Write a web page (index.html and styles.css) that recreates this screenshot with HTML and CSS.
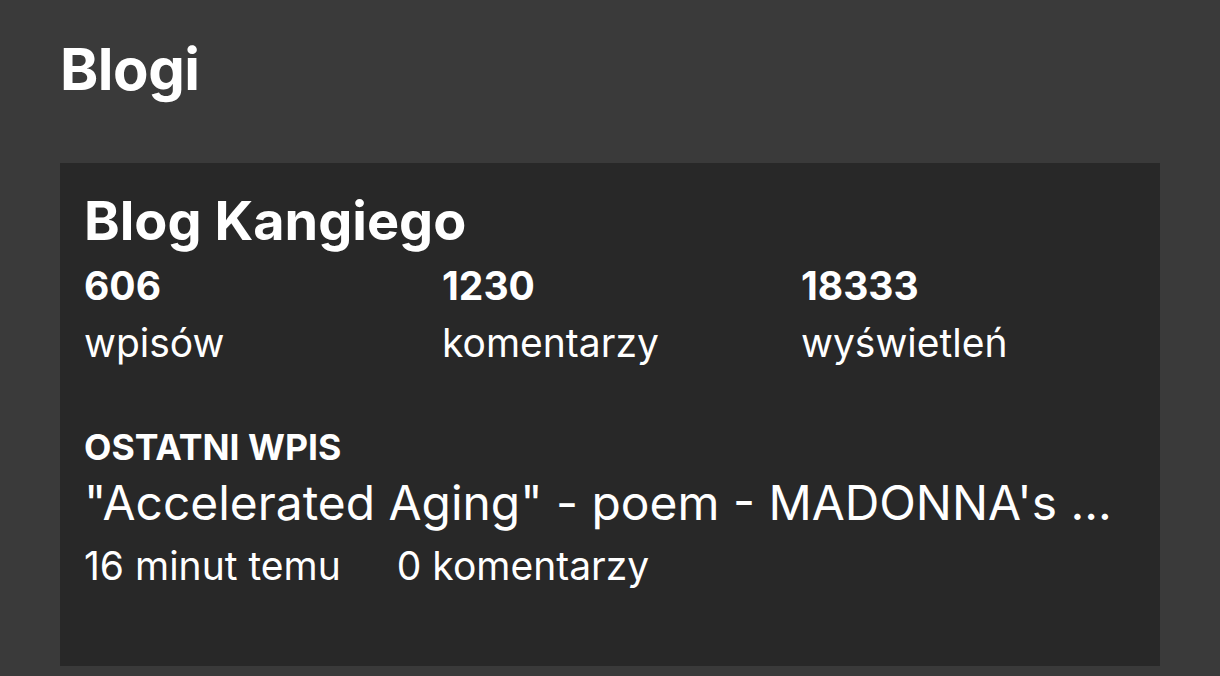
FILE: index.html
```html
<!DOCTYPE html>
<html lang="pl">
<head>
<meta charset="utf-8">
<link rel="stylesheet" href="styles.css">
</head>
<body>
<main class="page">
  <h1 class="page-title">Blogi</h1>
  <section class="card">
    <h2 class="blog-name">Blog Kangiego</h2>
    <div class="stats">
      <div class="stat"><div class="stat-value">606</div><div class="stat-label">wpisów</div></div>
      <div class="stat"><div class="stat-value">1230</div><div class="stat-label">komentarzy</div></div>
      <div class="stat"><div class="stat-value">18333</div><div class="stat-label">wyświetleń</div></div>
    </div>
    <div class="latest">
      <div class="latest-label">OSTATNI WPIS</div>
      <div class="latest-title">"Accelerated Aging" - poem - MADONNA's ...</div>
      <div class="latest-meta"><span>16 minut temu</span><span>0 komentarzy</span></div>
    </div>
  </section>
</main>
</body>
</html>
```
FILE: styles.css
```css
html, body {
  margin: 0;
  padding: 0;
  background: #3a3a3a;
  color: #ffffff;
  font-family: Inter, "Noto Sans", sans-serif;
}
.page {
  padding: 30px 60px 0 60px;
}
.page-title {
  margin: 0;
  font-size: 58px;
  font-weight: 700;
  line-height: 78px;
  letter-spacing: -0.5px;
}
.card {
  margin-top: 55px;
  background: #282828;
  padding: 24px 25px 40px 24px;
  height: 503px;
  box-sizing: border-box;
}
.blog-name {
  margin: 0;
  font-size: 54px;
  font-weight: 700;
  line-height: 68px;
}
.stats {
  display: grid;
  grid-template-columns: 358px 359px 1fr;
  margin-top: 7px;
}
.stat-value {
  font-size: 39px;
  font-weight: 700;
  line-height: 48px;
}
.stat-label {
  font-size: 39px;
  font-weight: 400;
  line-height: 54px;
  margin-top: 6px;
}
.latest {
  margin-top: 56px;
}
.latest-label {
  font-size: 35.6px;
  font-weight: 700;
  line-height: 44px;
}
.latest-title {
  margin-top: 3px;
  font-size: 47.9px;
  line-height: 60px;
  white-space: nowrap;
  overflow: hidden;
  text-overflow: ellipsis;
}
.latest-meta {
  margin-top: 3px;
  display: flex;
  gap: 56px;
  font-size: 39px;
  line-height: 60px;
}
```
